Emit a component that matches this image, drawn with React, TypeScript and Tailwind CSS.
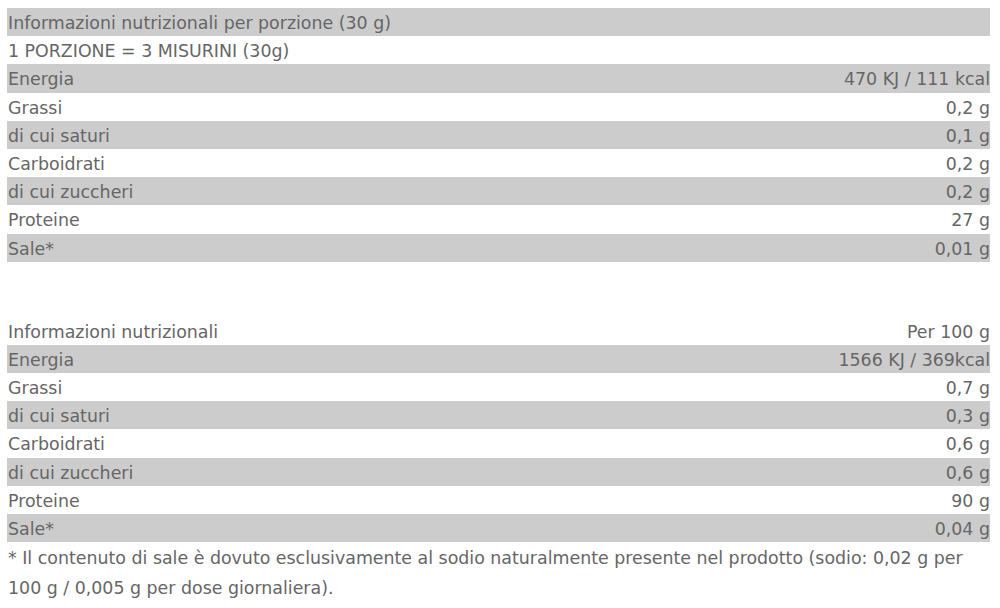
import React from "react";

type Row = [string, string];

const t1: Row[] = [
  ["Informazioni nutrizionali per porzione (30 g)", ""],
  ["1 PORZIONE = 3 MISURINI (30g)", ""],
  ["Energia", "470 KJ / 111 kcal"],
  ["Grassi", "0,2 g"],
  ["di cui saturi", "0,1 g"],
  ["Carboidrati", "0,2 g"],
  ["di cui zuccheri", "0,2 g"],
  ["Proteine", "27 g"],
  ["Sale*", "0,01 g"],
];

const t2: Row[] = [
  ["Informazioni nutrizionali", "Per 100 g"],
  ["Energia", "1566 KJ / 369kcal"],
  ["Grassi", "0,7 g"],
  ["di cui saturi", "0,3 g"],
  ["Carboidrati", "0,6 g"],
  ["di cui zuccheri", "0,6 g"],
  ["Proteine", "90 g"],
  ["Sale*", "0,04 g"],
];

function Table({ rows, shadeEven }: { rows: Row[]; shadeEven: boolean }) {
  return (
    <div className="flex flex-col">
      {rows.map(([a, b], i) => {
        const shaded = shadeEven ? i % 2 === 0 : i % 2 === 1;
        return (
          <div
            key={i}
            className={`flex h-[28.2px] pt-[2px] items-center justify-between ${shaded ? "bg-[#cccccc]" : ""}`}
          >
            <span className="pl-px">{a}</span>
            <span>{b}</span>
          </div>
        );
      })}
    </div>
  );
}

export default function App() {
  return (
    <div
      className="w-[1000px] h-[608px] bg-white text-[#666666] text-[17.4px] pl-[7px] pr-[10px] pt-[8px]"
      style={{ fontFamily: '"DejaVu Sans", sans-serif' }}
    >
      <Table rows={t1} shadeEven={true} />
      <div className="h-[55px]" />
      <Table rows={t2} shadeEven={false} />
      <p className="leading-[30px] pt-px pl-px whitespace-nowrap">
        * Il contenuto di sale è dovuto esclusivamente al sodio naturalmente presente nel prodotto (sodio: 0,02 g per
        <br />
        100 g / 0,005 g per dose giornaliera).
      </p>
    </div>
  );
}
